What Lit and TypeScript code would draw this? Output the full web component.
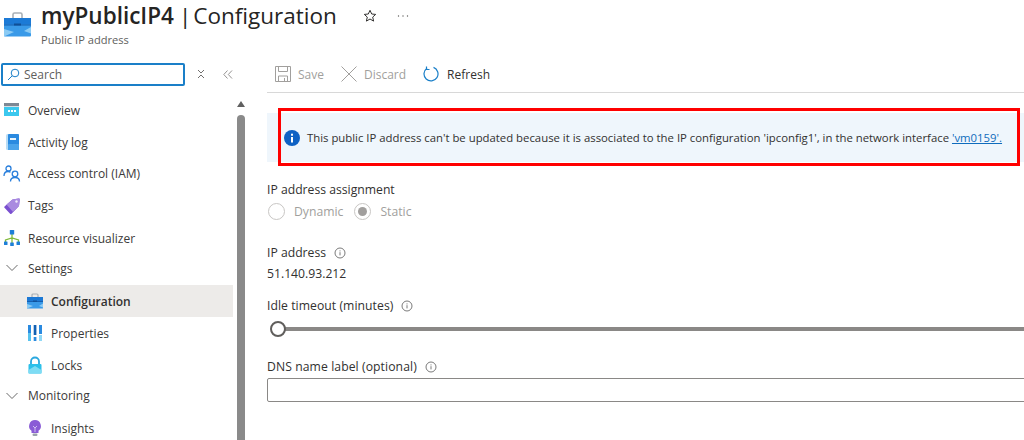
import { LitElement, html, css, svg } from "lit";
import { customElement } from "lit/decorators.js";

const icons: Record<string, unknown> = {
  overview: svg`<svg class="ic" width="18" height="16" viewBox="0 0 18 16"><rect x="1" y="1" width="15" height="13" fill="#3cc8ee"/><rect x="1" y="1" width="15" height="3.500" fill="#7d8894"/><rect x="1" y="4" width="15" height="1" fill="#d8dde2"/><g fill="#fff"><rect x="5" y="8" width="2" height="2"/><rect x="8" y="8" width="2" height="2"/><rect x="11" y="8" width="2" height="2"/></g></svg>`,
  log: svg`<svg class="ic" width="18" height="18" viewBox="0 0 18 18"><rect x="3" y="1" width="13" height="16" rx="1.500" fill="#b8dcf5"/><rect x="5" y="1" width="11" height="16" rx="1" fill="#2a8ae0"/><rect x="5" y="11" width="11" height="6" rx="1" fill="#4aa3ea"/><rect x="7" y="5" width="6" height="2" fill="#e8f4fc"/></svg>`,
  iam: svg`<svg class="ic" width="18" height="18" viewBox="0 0 18 18" fill="none" stroke="#2a7fdc" stroke-width="1.300"><circle cx="5.500" cy="3.500" r="2.500"/><path d="M1 11c0-2.800 1.500-4.500 4-4.500 1 0 1.800.2 2.500.7"/><circle cx="12" cy="9" r="2.800"/><path d="M7.500 16.500c0-2.500 2-4 4.500-4s4.500 1.500 4.500 4"/></svg>`,
  tag: svg`<svg class="ic" width="18" height="18" viewBox="0 0 18 18"><path d="M9.500 2.500L15.500 1.500a1 1 0 0 1 1.200 1.200L16 9l-7.500 7.700a1 1 0 0 1-1.400 0L1.500 10.800a1 1 0 0 1 0-1.400z" fill="#7a4fd0"/><path d="M9.500 2.500L15.500 1.500a1 1 0 0 1 1.200 1.200L16 9l-6 6-6.500-7.500z" fill="#a98ae0"/><circle cx="13.500" cy="4.500" r="1.200" fill="#efe8fa"/></svg>`,
  viz: svg`<svg class="ic" width="18" height="18" viewBox="0 0 18 18"><path d="M9 4v10M2.500 13.500v-2.500l6.500-2 6.500 2v2.500" fill="none" stroke="#7fba3a" stroke-width="1.300"/><rect x="6.800" y="1" width="4.400" height="4.400" rx=".5" fill="#1e7fd8"/><rect x="1" y="12.500" width="3.500" height="3.500" rx=".5" fill="#1e7fd8"/><rect x="7.200" y="13.400" width="3.600" height="3.600" rx=".5" fill="#1e7fd8"/><rect x="13.500" y="12.500" width="3.500" height="3.500" rx=".5" fill="#1e7fd8"/></svg>`,
  config: svg`<svg class="ic" width="18" height="16" viewBox="0 0 18 16"><path d="M6 4V2a1 1 0 0 1 1-1h4a1 1 0 0 1 1 1v2" fill="none" stroke="#a9b0b6" stroke-width="1.200"/><rect x="1" y="4" width="16" height="11.500" rx=".5" fill="#3a9ae8"/><rect x="1" y="4" width="16" height="4" fill="#1c78d4"/><rect x="1" y="8" width="16" height="1" fill="#155fb0"/><path d="M1 11l6 2-6 2.500z" fill="#8ccbf4"/><path d="M17 10.500l-4 2.500 4 1.500z" fill="#8ccbf4"/><rect x="7" y="7.500" width="4" height="1.300" fill="#0f4f96"/></svg>`,
  props: svg`<svg class="ic" width="18" height="18" viewBox="0 0 18 18"><rect x="2" y="1" width="3" height="16" fill="#2a8ae0"/><rect x="2" y="9" width="3" height="8" fill="#56c3ef"/><rect x="7.700" y="1" width="2.700" height="10" fill="#1261b4"/><rect x="7.700" y="13" width="2.700" height="4" fill="#2a8ae0"/><rect x="13" y="1" width="3" height="9" fill="#2a8ae0"/><rect x="13" y="11" width="3" height="6" fill="#8fd8f6"/></svg>`,
  lock: svg`<svg class="ic" width="18" height="18" viewBox="0 0 18 18"><path d="M5 8.500V5.500a4 4 0 0 1 8 0v3" fill="none" stroke="#2aa8df" stroke-width="1.800"/><rect x="2.500" y="8" width="13" height="9.500" rx="1" fill="#2cc0ea"/><path d="M2.500 14l6.500-4 6.500 4v3.500h-13z" fill="#7edcf4"/></svg>`,
  bulb: svg`<svg class="ic" width="18" height="18" viewBox="0 0 18 18"><path d="M9 1a6 6 0 0 0-3.500 10.800V14h7v-2.200A6 6 0 0 0 9 1z" fill="#8a5cd6"/><path d="M7 7l2 2 2-2M9 9v4" stroke="#e3d8f7" stroke-width=".8" fill="none"/><rect x="6.500" y="14.500" width="5" height="2.500" rx="1.200" fill="#9aa2ab"/></svg>`,
};

const chevron = svg`<svg class="chev" width="14" height="8" viewBox="0 0 14 8" fill="none" stroke="#6b6b6b" stroke-width="1"><path d="M1.500 1l5.500 5.500L12.500 1"/></svg>`;
const infoSmall = svg`<svg class="tip" width="12" height="12" viewBox="0 0 12 12" fill="none" stroke="#6b6b6b" stroke-width=".9"><circle cx="6" cy="6" r="5"/><path d="M6 5.200v3.200M6 3.400v1"/></svg>`;

type Row = { label: string; icon?: string; kind: "top" | "group" | "child" | "active"; h: number; pb?: number };
const rows: Row[] = [
  { label: "Overview", icon: "overview", kind: "top", h: 32 },
  { label: "Activity log", icon: "log", kind: "top", h: 32 },
  { label: "Access control (IAM)", icon: "iam", kind: "top", h: 31 },
  { label: "Tags", icon: "tag", kind: "top", h: 33 },
  { label: "Resource visualizer", icon: "viz", kind: "top", h: 32 },
  { label: "Settings", kind: "group", h: 31, pb: 3 },
  { label: "Configuration", icon: "config", kind: "active", h: 32 },
  { label: "Properties", icon: "props", kind: "child", h: 32 },
  { label: "Locks", icon: "lock", kind: "child", h: 32 },
  { label: "Monitoring", kind: "group", h: 31, pb: 2 },
  { label: "Insights", icon: "bulb", kind: "child", h: 32 },
];

@customElement("app-root")
export class AppRoot extends LitElement {
  static styles = css`
    :host {
      display: block;
      width: 1024px;
      height: 440px;
      overflow: hidden;
      background: #fff;
      color: #323130;
      font-family: "Open Sans", "Noto Sans", sans-serif;
      font-size: 12px;
      position: relative;
    }
    .header { height: 60px; display: flex; box-sizing: border-box; padding: 0 0 0 4px; }
    .hicon { margin-top: 12px; width: 27px; height: 25px; flex: none; }
    .htext { margin-left: 10px; display: flex; flex-direction: column; }
    .title { display: flex; align-items: center; height: 31px; font-size: 22.500px; line-height: 31px; color: #252423; white-space: pre; }
    .title b { font-weight: 600; }
    .title .sep { margin: 0 2px 0 5px; }
    .title .star { margin-left: 26px; }
    .title .more { margin-left: 20px; }
    .sub { font-size: 11.100px; color: #605e5c; line-height: 14px; margin-top: 2px; }
    .body { display: flex; height: 380px; }
    .side { width: 267px; flex: none; display: flex; flex-direction: column; }
    .searchrow { display: flex; align-items: center; height: 24px; margin-top: 2px; }
    .search { width: 184px; height: 23px; margin-left: 1px; box-sizing: border-box; border: 2px solid #1a7fc8; border-radius: 2px; display: flex; align-items: center; gap: 4px; padding-left: 4px; color: #605e5c; font-size: 12px; }
    .tool { margin-left: 12px; }
    .tool2 { margin-left: 18px; }
    .navwrap { display: flex; margin-top: 8px; flex: 1; min-height: 0; }
    .nav { width: 233px; flex: none; }
    .row { display: flex; align-items: center; white-space: nowrap; font-size: 12px; color: #3b3a39; box-sizing: border-box; }
    .row .ic { flex: none; }
    .top { padding-left: 3px; gap: 7px; }
    .group { padding-left: 5px; gap: 9px; }
    .child { padding-left: 26px; gap: 7px; }
    .active { padding-left: 26px; gap: 7px; background: #edebe9; font-weight: 600; color: #323130; }
    .scroll { width: 13px; margin-left: 1px; display: flex; flex-direction: column; align-items: center; }
    .arrow { width: 0; height: 0; border: 4px solid transparent; border-top: 0; border-bottom: 6px solid #606060; margin-top: 7px; margin-bottom: 8px; }
    .thumb { width: 8px; flex: 1; background: #8a8a8a; border-radius: 4px 4px 0 0; }
    .main { flex: 1; min-width: 0; display: flex; flex-direction: column; }
    .toolbar { display: flex; align-items: center; border-bottom: 1px solid #d8d8d8; padding: 0 0 4px 8px; box-sizing: border-box; height: 33px; color: #a19f9d; font-size: 12px; }
    .tb { display: flex; align-items: center; gap: 7px; margin-right: 17px; }
    .tb.on { color: #323130; gap: 8px; }
    .notice { margin-top: 20px; height: 49px; background: #eff6fc; display: flex; align-items: center; padding-left: 17px; gap: 7px; font-size: 11.350px; white-space: nowrap; }
    .notice a { color: #0f6cbd; text-decoration: underline; }
    .form { padding-top: 20px; font-size: 12.200px; }
    .lab { display: flex; align-items: center; gap: 8px; height: 16px; line-height: 16px; }
    .radios { display: flex; align-items: center; height: 20px; margin-top: 3px; color: #a19f9d; }
    .radio { width: 17px; height: 17px; border: 1px solid #c8c6c4; border-radius: 50%; box-sizing: border-box; display: flex; align-items: center; justify-content: center; margin: 0 9px 0 1px; }
    .radio i { width: 9px; height: 9px; background: #a19f9d; border-radius: 50%; }
    .dyn { margin-right: 10px; }
    .val { margin-top: 5px; line-height: 16px; }
    .idle { letter-spacing: .05px; }
    .dns { letter-spacing: .08px; }
    .slider { position: relative; margin-top: 7px; height: 16px; display: flex; align-items: center; padding-left: 11px; }
    .track { flex: 1; height: 4px; background: #8a8886; }
    .knob { position: absolute; left: 3px; top: 0; width: 16px; height: 16px; background: #fff; border: 2px solid #605e5c; border-radius: 50%; box-sizing: border-box; }
    .input { height: 24px; width: 800px; box-sizing: border-box; border: 1px solid #8a8886; border-radius: 2px; margin-top: 3px; }
    .gap-ip { margin-top: 24px; }
    .gap-idle { margin-top: 16px; }
    .gap-dns { margin-top: 22px; }
    .red { position: absolute; left: 278px; top: 108px; width: 742px; height: 58px; box-sizing: border-box; border: 3px solid #f00; pointer-events: none; }
  `;

  render() {
    return html`
      <div class="header">
        <svg class="hicon" viewBox="0 0 27 25">
          <path d="M9 7V2.500A1.500 1.500 0 0 1 10.500 1h6A1.500 1.500 0 0 1 18 2.500V7" fill="none" stroke="#a9b0b6" stroke-width="1.600"/>
          <rect x="0" y="6" width="27" height="18.500" rx="1" fill="#3a9ae8"/>
          <rect x="0" y="6" width="27" height="6.500" fill="#1c7ad6"/>
          <rect x="0" y="12.500" width="27" height="1" fill="#155fb0"/>
          <path d="M0 17l10 3-10 4.500z" fill="#8ccbf4"/>
          <path d="M27 15l-7 4 7 2.500z" fill="#8ccbf4"/>
          <rect x="10" y="11.500" width="7" height="2" fill="#0f4f96"/>
        </svg>
        <div class="htext">
          <div class="title"><b>myPublicIP4</b><span class="sep">|</span><span>Configuration</span>
            <svg class="star" width="14" height="14" viewBox="0 0 14 14" fill="none" stroke="#323130" stroke-width="1"><path d="M7 1.300l1.700 3.700 4 .4-3 2.700.9 4L7 10l-3.600 2.100.9-4-3-2.700 4-.4z"/></svg>
            <svg class="more" width="12" height="4" viewBox="0 0 12 4" fill="#605e5c"><circle cx="1.500" cy="2" r=".7"/><circle cx="6" cy="2" r=".7"/><circle cx="10.500" cy="2" r=".7"/></svg>
          </div>
          <div class="sub">Public IP address</div>
        </div>
      </div>
      <div class="body">
        <div class="side">
          <div class="searchrow">
            <div class="search">
              <svg width="13" height="13" viewBox="0 0 13 13" fill="none" stroke="#1a7fc8" stroke-width="1"><circle cx="8" cy="5" r="3.800"/><path d="M5.200 7.800L1 12"/></svg>
              <span>Search</span>
            </div>
            <svg class="tool" width="8" height="10" viewBox="0 0 8 10" fill="none" stroke="#605e5c" stroke-width=".9"><path d="M1 1l3 3 3-3M1 9l3-3 3 3"/></svg>
            <svg class="tool2" width="10" height="9" viewBox="0 0 10 9" fill="none" stroke="#8a8886" stroke-width=".9"><path d="M4.500 .5L.8 4.500l3.700 4M9 .5L5.300 4.500 9 8.500"/></svg>
          </div>
          <div class="navwrap">
            <div class="nav">
              ${rows.map(
                (r) => html`<div class="row ${r.kind}" style="height:${r.h}px;padding-bottom:${r.pb ?? 0}px">
                  ${r.icon ? icons[r.icon] : chevron}<span>${r.label}</span>
                </div>`
              )}
            </div>
            <div class="scroll"><div class="arrow"></div><div class="thumb"></div></div>
          </div>
        </div>
        <div class="main">
          <div class="toolbar">
            <div class="tb">
              <svg width="16" height="16" viewBox="0 0 16 16" fill="none" stroke="#a19f9d" stroke-width="1"><path d="M.5.500h15v15H.5z"/><path d="M3.500 .5v5h9v-5M3.500 15.500v-5.500h9v5.500M9.500 12v3"/></svg>
              <span>Save</span>
            </div>
            <div class="tb">
              <svg width="16" height="16" viewBox="0 0 16 16" fill="none" stroke="#a19f9d" stroke-width="1"><path d="M.5.500l15 15M15.500.5l-15 15"/></svg>
              <span>Discard</span>
            </div>
            <div class="tb on">
              <svg width="16" height="16" viewBox="0 0 16 16" fill="none" stroke="#1a7fc8" stroke-width="1.200"><path d="M4 2.200A7 7 0 1 0 10.500 1.400"/><path d="M3.500 .5v3h3"/></svg>
              <span>Refresh</span>
            </div>
          </div>
          <div class="notice">
            <svg width="16" height="16" viewBox="0 0 16 16"><circle cx="8" cy="8" r="8" fill="#0f62c4"/><rect x="7" y="7" width="2" height="5.500" fill="#fff"/><rect x="7" y="3.700" width="2" height="2" fill="#fff"/></svg>
            <span>This public IP address can't be updated because it is associated to the IP configuration 'ipconfig1', in the network interface <a href="#">'vm0159'.</a></span>
          </div>
          <div class="form">
            <div class="lab">IP address assignment</div>
            <div class="radios">
              <div class="radio"></div><span class="dyn">Dynamic</span>
              <div class="radio"><i></i></div><span>Static</span>
            </div>
            <div class="lab gap-ip">IP address ${infoSmall}</div>
            <div class="val">51.140.93.212</div>
            <div class="lab idle gap-idle">Idle timeout (minutes) ${infoSmall}</div>
            <div class="slider"><div class="track"></div><div class="knob"></div></div>
            <div class="lab dns gap-dns">DNS name label (optional) ${infoSmall}</div>
            <div class="input"></div>
          </div>
        </div>
      </div>
      <div class="red"></div>
    `;
  }
}
